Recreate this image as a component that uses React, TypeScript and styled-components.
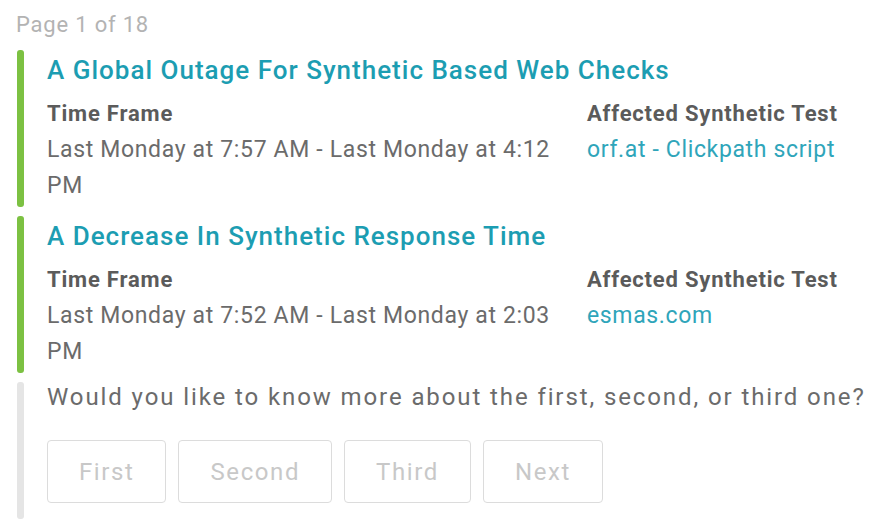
import styled, { createGlobalStyle } from "styled-components";

const GlobalStyle = createGlobalStyle`
  html, body {
    margin: 0;
    padding: 0;
    background: #fff;
    font-family: Roboto, "Liberation Sans", sans-serif;
  }
`;

const Page = styled.div`
  width: 892px;
  height: 522px;
  overflow: hidden;
  padding: 9px 0 0 16px;
  box-sizing: border-box;
`;

const PageInfo = styled.div`
  font-size: 22px;
  line-height: 32px;
  letter-spacing: 0.8px;
  color: #b3b3b3;
  margin-bottom: 9px;
`;

const List = styled.div`
  display: flex;
  flex-direction: column;
  gap: 9px;
  padding-left: 1px;
`;

const Card = styled.div<{ $muted?: boolean }>`
  position: relative;
  padding: ${({ $muted }) => ($muted ? "0 0 16px 30px" : "2px 0 3px 30px")};
  &::before {
    content: "";
    position: absolute;
    left: 0;
    top: 0;
    bottom: 0;
    width: 7px;
    border-radius: 3px;
    background: ${({ $muted }) => ($muted ? "#e5e5e5" : "#7cc142")};
  }
`;

const Title = styled.div`
  font-size: 26px;
  line-height: 36px;
  letter-spacing: 1px;
  font-weight: 500;
  color: #1c9db2;
  margin-bottom: 8px;
  white-space: nowrap;
`;

const Details = styled.div`
  display: grid;
  grid-template-columns: 520px auto;
  column-gap: 20px;
`;

const Field = styled.div`
  line-height: 36px;
`;

const Label = styled.div`
  font-size: 22px;
  letter-spacing: 0.8px;
  font-weight: 700;
  color: #5b5b5b;
`;

const Value = styled.div`
  font-size: 23px;
  letter-spacing: 0.65px;
  color: #6b6b6b;
`;

const Link = styled.a`
  font-size: 23px;
  letter-spacing: 0.65px;
  color: #2fa5ba;
  text-decoration: none;
`;

const Question = styled.div`
  font-size: 24px;
  line-height: 30px;
  letter-spacing: 1.9px;
  color: #6b6b6b;
  margin-bottom: 28px;
  white-space: nowrap;
`;

const Buttons = styled.div`
  display: flex;
  gap: 12px;
`;

const Choice = styled.button`
  height: 63px;
  padding: 0 31px;
  border: 1px solid #dcdcdc;
  border-radius: 4px;
  background: #fff;
  font-family: inherit;
  font-size: 24px;
  letter-spacing: 1.6px;
  color: #c8c8c8;
  cursor: pointer;
`;

const problems = [
  {
    title: "A Global Outage For Synthetic Based Web Checks",
    time: "Last Monday at 7:57 AM - Last Monday at 4:12 PM",
    test: "orf.at - Clickpath script",
  },
  {
    title: "A Decrease In Synthetic Response Time",
    time: "Last Monday at 7:52 AM - Last Monday at 2:03 PM",
    test: "esmas.com",
  },
];

export default function App() {
  return (
    <Page>
      <GlobalStyle />
      <PageInfo>Page 1 of 18</PageInfo>
      <List>
        {problems.map((p) => (
          <Card key={p.title}>
            <Title>{p.title}</Title>
            <Details>
              <Field>
                <Label>Time Frame</Label>
                <Value>{p.time}</Value>
              </Field>
              <Field>
                <Label>Affected Synthetic Test</Label>
                <Link href="#">{p.test}</Link>
              </Field>
            </Details>
          </Card>
        ))}
        <Card $muted>
          <Question>
            Would you like to know more about the first, second, or third one?
          </Question>
          <Buttons>
            {["First", "Second", "Third", "Next"].map((b) => (
              <Choice key={b}>{b}</Choice>
            ))}
          </Buttons>
        </Card>
      </List>
    </Page>
  );
}
